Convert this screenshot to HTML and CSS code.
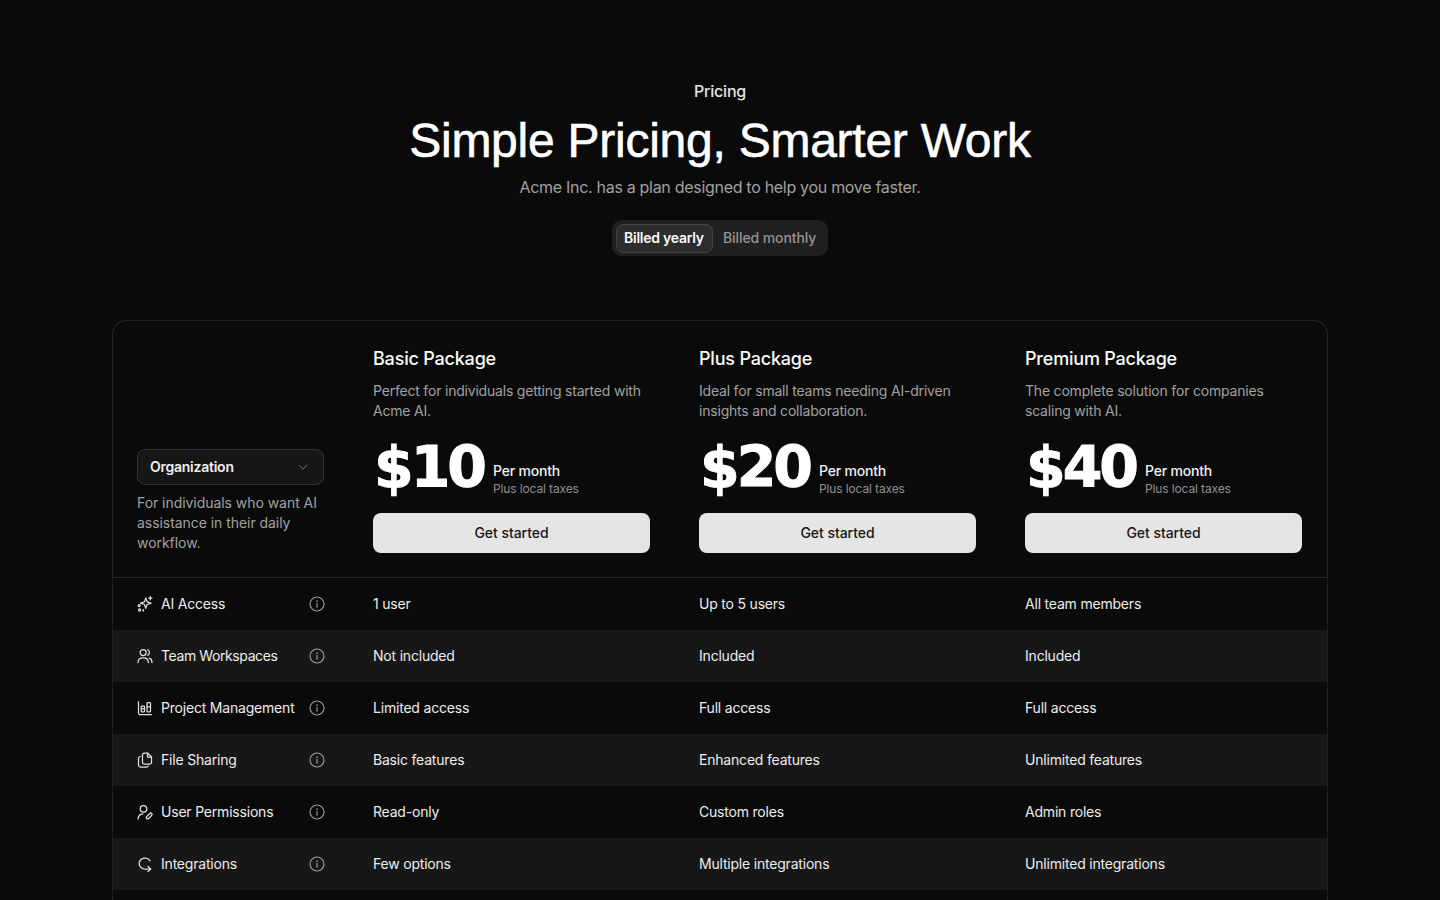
FILE: index.html
```html
<!DOCTYPE html>
<html lang="en">
<head>
<meta charset="utf-8">
<title>Pricing</title>
<link rel="stylesheet" href="styles.css">
</head>
<body>
<main class="page">
  <header class="hero">
    <p class="eyebrow">Pricing</p>
    <h1 class="title">Simple Pricing, Smarter Work</h1>
    <p class="subtitle">Acme Inc. has a plan designed to help you move faster.</p>
    <div class="toggle">
      <span class="toggle-item active">Billed yearly</span>
      <span class="toggle-item">Billed monthly</span>
    </div>
  </header>

  <section class="card">
    <div class="head">
      <div class="head-left">
        <div class="select">
          <span class="select-label">Organization</span>
          <svg class="chev" viewBox="0 0 12 12"><path d="M2 4.2 6 8.2l4-4"/></svg>
        </div>
        <p class="audience">For individuals who want AI assistance in their daily workflow.</p>
      </div>
      <div class="plan">
        <h2>Basic Package</h2>
        <p class="plan-desc">Perfect for individuals getting started with Acme AI.</p>
        <div class="price"><span class="amount">$10</span><div class="per"><b>Per month</b><small>Plus local taxes</small></div></div>
        <button class="cta">Get started</button>
      </div>
      <div class="plan">
        <h2>Plus Package</h2>
        <p class="plan-desc">Ideal for small teams needing AI-driven insights and collaboration.</p>
        <div class="price"><span class="amount">$20</span><div class="per"><b>Per month</b><small>Plus local taxes</small></div></div>
        <button class="cta">Get started</button>
      </div>
      <div class="plan">
        <h2>Premium Package</h2>
        <p class="plan-desc">The complete solution for companies scaling with AI.</p>
        <div class="price"><span class="amount">$40</span><div class="per"><b>Per month</b><small>Plus local taxes</small></div></div>
        <button class="cta">Get started</button>
      </div>
    </div>

    <div class="row">
      <div class="feat">
        <svg class="ico" viewBox="0 0 16 16"><path d="M8.800 2 10.100 5.900l3.900 1.300-3.900 1.300-1.300 3.900-1.300-3.900-3.900-1.300 3.900-1.300z"/><path d="M13.300.6v3.200M11.700 2.200h3.200"/><circle cx="2.200" cy="9.600" r="1"/><circle cx="2.600" cy="14" r="1.100"/><path d="M6.200 13.400v1.800"/></svg>
        <span>AI Access</span>
        <svg class="info" viewBox="0 0 16 16"><circle cx="8" cy="8" r="7"/><path d="M8 7.400v3.800M8 4.600v.9"/></svg>
      </div>
      <div class="val">1 user</div><div class="val">Up to 5 users</div><div class="val">All team members</div>
    </div>
    <div class="row alt">
      <div class="feat">
        <svg class="ico" viewBox="0 0 16 16"><circle cx="6.200" cy="4.600" r="3"/><path d="M1 14.500c0-3 2-4.700 5.200-4.700s5.200 1.700 5.200 4.700"/><path d="M10.600 1.800a3 3 0 0 1 0 5.500M12.400 10.200c1.700.6 2.600 2.200 2.600 4.300"/></svg>
        <span class="tight">Team Workspaces</span>
        <svg class="info" viewBox="0 0 16 16"><circle cx="8" cy="8" r="7"/><path d="M8 7.400v3.800M8 4.600v.9"/></svg>
      </div>
      <div class="val">Not included</div><div class="val">Included</div><div class="val">Included</div>
    </div>
    <div class="row">
      <div class="feat">
        <svg class="ico" viewBox="0 0 16 16"><path d="M1.500 1.500v11.500a1.500 1.500 0 0 0 1.500 1.500h11.500"/><rect x="4.300" y="6" width="3.200" height="5.800" rx=".6"/><rect x="10" y="2.500" width="3.500" height="9.300" rx=".6"/><path d="M10 6.800h3.500M4.300 8.800h3.200"/></svg>
        <span>Project Management</span>
        <svg class="info" viewBox="0 0 16 16"><circle cx="8" cy="8" r="7"/><path d="M8 7.400v3.800M8 4.600v.9"/></svg>
      </div>
      <div class="val">Limited access</div><div class="val">Full access</div><div class="val">Full access</div>
    </div>
    <div class="row alt">
      <div class="feat">
        <svg class="ico" viewBox="0 0 16 16"><path d="M5.500 3V2.800A1.800 1.800 0 0 1 7.300 1h3.200l4 4v5.200a1.800 1.800 0 0 1-1.800 1.800H7.300a1.800 1.800 0 0 1-1.800-1.800z"/><path d="M10.500 1v4h4"/><path d="M3.200 4.500A2 2 0 0 0 1.500 6.500v6.200a2.300 2.300 0 0 0 2.300 2.300h5.700a2 2 0 0 0 1.700-1"/></svg>
        <span>File Sharing</span>
        <svg class="info" viewBox="0 0 16 16"><circle cx="8" cy="8" r="7"/><path d="M8 7.400v3.800M8 4.600v.9"/></svg>
      </div>
      <div class="val">Basic features</div><div class="val">Enhanced features</div><div class="val">Unlimited features</div>
    </div>
    <div class="row">
      <div class="feat">
        <svg class="ico" viewBox="0 0 16 16"><circle cx="6.500" cy="4.800" r="3.300"/><path d="M1 15c.3-3 2-5 4.800-5.200"/><path d="M9.700 14.500c-.6-.6-.3-1.500.2-2.100l2.600-2.700c.6-.6 1.600-.9 2.200-.3s.4 1.500-.2 2.100l-2.600 2.700c-.6.6-1.600.9-2.200.3z"/></svg>
        <span>User Permissions</span>
        <svg class="info" viewBox="0 0 16 16"><circle cx="8" cy="8" r="7"/><path d="M8 7.400v3.800M8 4.600v.9"/></svg>
      </div>
      <div class="val">Read-only</div><div class="val">Custom roles</div><div class="val">Admin roles</div>
    </div>
    <div class="row alt">
      <div class="feat">
        <svg class="ico" viewBox="0 0 16 16"><path d="M13 4.800A6 6 0 0 0 2.200 6.500C1.700 9.800 4 12.800 7.500 13h6"/><path d="M11 10.500l2.700 2.500-2.700 2.500"/></svg>
        <span>Integrations</span>
        <svg class="info" viewBox="0 0 16 16"><circle cx="8" cy="8" r="7"/><path d="M8 7.400v3.800M8 4.600v.9"/></svg>
      </div>
      <div class="val">Few options</div><div class="val">Multiple integrations</div><div class="val">Unlimited integrations</div>
    </div>
    <div class="row"></div>
  </section>
</main>
</body>
</html>
```
FILE: styles.css
```css
* { box-sizing: border-box; margin: 0; padding: 0; }
html, body { background: #0a0a0a; }
body { font-family: Inter, "Liberation Sans", sans-serif; color: #fafafa; overflow-x: hidden; }
.page { padding-top: 79px; }
.hero { display: flex; flex-direction: column; align-items: center; }
.eyebrow { font-size: 16px; line-height: 24px; font-weight: 500; color: #e5e5e5; letter-spacing: -.2px; }
.title { font-family: "Liberation Sans", Arial, sans-serif; font-size: 48px; line-height: 56px; font-weight: 400; color: #fff; margin-top: 10px; -webkit-text-stroke: .6px #fff; letter-spacing: -.25px; }
.subtitle { font-size: 16px; line-height: 24px; color: #a1a1a1; margin-top: 6px; letter-spacing: -.3px; }
.toggle { display: flex; align-items: center; height: 36px; width: 216px; margin-top: 21px; padding: 4px; border-radius: 10px; background: #202020; font-size: 14px; letter-spacing: -.1px; }
.toggle-item { flex: none; height: 29px; line-height: 25px; padding: 0 9px; color: #949494; border: 1px solid transparent; border-radius: 7px; font-weight: 500; white-space: nowrap; }
.toggle-item.active { background: #2d2d2d; border-color: #424242; color: #fafafa; font-weight: 600; width: 97px; padding: 0 7px; letter-spacing: -.25px; }
.card { width: 1216px; margin: 64px auto 0; border: 1px solid #222; border-radius: 14px 14px 0 0; border-bottom: 0; overflow: hidden; }
.head { display: grid; grid-template-columns: 236px repeat(3, 326px); border-bottom: 1px solid #262626; height: 257px; }
.head-left { padding: 0 24px 24px; display: flex; flex-direction: column; justify-content: flex-end; }
.select { height: 36px; width: 187px; display: flex; align-items: center; justify-content: space-between; padding: 0 14px 0 12px; background: #161616; border: 1px solid #333; border-radius: 8px; font-size: 14px; font-weight: 600; color: #eee; letter-spacing: -.25px; }
.select-label { padding-bottom: 2px; }
.chev { width: 12px; height: 12px; fill: none; stroke: #777; stroke-width: 1; }
.audience { margin-top: 8px; font-size: 14px; line-height: 20px; color: #a1a1a1; letter-spacing: -.05px; }
.plan { padding: 24px 25px 0 24px; }
.plan h2 { font-size: 18px; line-height: 28px; font-weight: 550; color: #fafafa; letter-spacing: -.2px; }
.plan-desc { margin-top: 8px; font-size: 14px; line-height: 20px; color: #a1a1a1; letter-spacing: -.2px; }
.price { display: flex; align-items: flex-end; height: 60px; margin-top: 17px; }
.amount { font-family: "DejaVu Sans", sans-serif; font-size: 57px; line-height: 58px; font-weight: 700; color: #fff; -webkit-text-stroke: 1px #fff; letter-spacing: -3px; width: 120px; padding-left: 1px; align-self: flex-start; }
.per { display: flex; flex-direction: column; margin-bottom: 1px; }
.per b { font-size: 14px; line-height: 20px; font-weight: 500; color: #f0f0f0; letter-spacing: -.2px; }
.per small { font-size: 12px; line-height: 16px; color: #8f8f8f; letter-spacing: -.13px; }
.cta { display: block; width: 100%; height: 40px; margin-top: 15px; background: #e5e5e5; color: #171717; border: 0; border-radius: 8px; font: 500 14px/20px Inter, "Liberation Sans", sans-serif; letter-spacing: -.05px; }
.row { display: grid; grid-template-columns: 236px repeat(3, 326px); height: 52px; align-items: center; font-size: 14px; color: #ededed; letter-spacing: -.2px; }
.row.alt { background: #171717; }
.feat { display: flex; align-items: center; padding: 0 24px; }
.feat span { margin-left: 8px; flex: 1; white-space: nowrap; padding-bottom: 2px; }
.feat span.tight { letter-spacing: -.4px; }
.val { padding: 0 0 2px 24px; }
.ico { width: 16px; height: 16px; fill: none; stroke: #e0e0e0; stroke-width: 1.25; stroke-linecap: round; stroke-linejoin: round; flex: none; }
.info { width: 16px; height: 16px; fill: none; stroke: #9a9a9a; stroke-width: 1.2; stroke-linecap: round; flex: none; }
```
